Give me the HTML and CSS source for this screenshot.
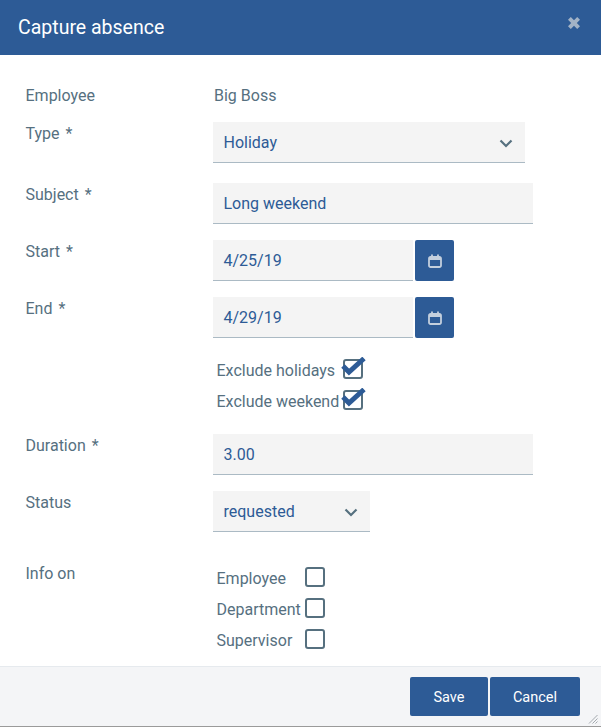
FILE: index.html
```html
<!DOCTYPE html>
<html lang="en">
<head>
<meta charset="utf-8">
<title>Capture absence</title>
<link rel="stylesheet" href="styles.css">
</head>
<body>
<div class="dialog">
  <header class="head">
    <h1 class="title">Capture absence</h1>
    <svg class="close" viewBox="0 0 12 12" width="12" height="12"><path d="M2.800 0 6 3.200 9.200 0 12 2.800 8.800 6 12 9.200 9.200 12 6 8.800 2.800 12 0 9.200 3.200 6 0 2.800Z"/></svg>
  </header>
  <main class="form">
    <div class="row row-employee">
      <div class="label">Employee</div>
      <div class="static">Big Boss</div>
    </div>
    <div class="row row-type">
      <div class="label">Type <span class="req">*</span></div>
      <div class="field w-type">Holiday
        <svg class="chev" viewBox="0 0 14 9" width="14" height="9"><path d="M1.500 1.500 7 7 12.500 1.500"/></svg>
      </div>
    </div>
    <div class="row row-subject">
      <div class="label">Subject <span class="req">*</span></div>
      <div class="field w-full">Long weekend</div>
    </div>
    <div class="row row-start">
      <div class="label">Start <span class="req">*</span></div>
      <div class="field w-date">4/25/19</div>
      <button class="cal" type="button" aria-label="Pick start date">
        <svg viewBox="0 0 16 16" width="16" height="16"><path class="cal-line" d="M2 5.500a1.500 1.500 0 0 1 1.500-1.500h9a1.500 1.500 0 0 1 1.500 1.500v7a1.500 1.500 0 0 1-1.500 1.500h-9a1.500 1.500 0 0 1-1.500-1.500zM2 5.500h12M5 1.500v2.500M11 1.500v2.500"/><rect class="cal-band" x="2" y="4" width="12" height="3"/></svg>
      </button>
    </div>
    <div class="row row-end">
      <div class="label">End <span class="req">*</span></div>
      <div class="field w-date">4/29/19</div>
      <button class="cal" type="button" aria-label="Pick end date">
        <svg viewBox="0 0 16 16" width="16" height="16"><path class="cal-line" d="M2 5.500a1.500 1.500 0 0 1 1.500-1.500h9a1.500 1.500 0 0 1 1.500 1.500v7a1.500 1.500 0 0 1-1.500 1.500h-9a1.500 1.500 0 0 1-1.500-1.500zM2 5.500h12M5 1.500v2.500M11 1.500v2.500"/><rect class="cal-band" x="2" y="4" width="12" height="3"/></svg>
      </button>
    </div>
    <div class="checks checks-exclude">
      <div class="check-row"><span class="check-text">Exclude holidays</span>
        <span class="box"><svg class="tick" viewBox="0 0 25 19" width="25" height="19"><path d="M2 9 8 15 23 1.500"/></svg></span></div>
      <div class="check-row"><span class="check-text">Exclude weekend</span>
        <span class="box"><svg class="tick" viewBox="0 0 25 19" width="25" height="19"><path d="M2 9 8 15 23 1.500"/></svg></span></div>
    </div>
    <div class="row row-duration">
      <div class="label">Duration <span class="req">*</span></div>
      <div class="field w-full">3.00</div>
    </div>
    <div class="row row-status">
      <div class="label">Status</div>
      <div class="field w-status">requested
        <svg class="chev" viewBox="0 0 14 9" width="14" height="9"><path d="M1.500 1.500 7 7 12.500 1.500"/></svg>
      </div>
    </div>
    <div class="row row-info">
      <div class="label label-info">Info on</div>
      <div class="checks">
        <div class="check-row"><span class="check-text">Employee</span><span class="box"></span></div>
        <div class="check-row"><span class="check-text">Department</span><span class="box"></span></div>
        <div class="check-row"><span class="check-text">Supervisor</span><span class="box"></span></div>
      </div>
    </div>
  </main>
  <footer class="foot">
    <button class="btn btn-save" type="button">Save</button>
    <button class="btn btn-cancel" type="button">Cancel</button>
    <svg class="grip" viewBox="0 0 10 10" width="10" height="10"><path d="M9.500 1 1 9.500M9.500 4.500 4.500 9.500M9.500 7.500 7.500 9.500"/></svg>
  </footer>
</div>
</body>
</html>
```
FILE: styles.css
```css
* { box-sizing: border-box; }
html, body { margin: 0; padding: 0; }
body { font-family: Roboto, "Liberation Sans", sans-serif; font-size: 16px; color: #56707f; background: #fff; }
.dialog { position: relative; width: 601px; height: 727px; display: flex; flex-direction: column; border-bottom: 1px solid #9a9a9a; overflow: hidden; }
.head { flex: none; height: 55px; background: #2d5b96; display: flex; align-items: center; justify-content: space-between; padding: 0 21px 0 18px; }
.title { margin: 0; font-size: 19.500px; font-weight: 400; color: #fff; line-height: 55px; }
.close { fill: #a3b3c6; margin-top: -10px; }
.form { flex: 1; padding: 30px 0 0 25.500px; }
.row { display: flex; align-items: flex-start; }
.label { flex: none; width: 187.500px; line-height: 20px; padding-top: 2px; }
.row-employee .label, .label-info { padding-top: 1px; }
.req { margin-left: 2px; }
.static { line-height: 20px; padding: 1px 0 0 1px; }
.row-employee { height: 37px; }
.row-type { height: 61px; }
.row-subject { height: 57px; }
.row-start { height: 57px; }
.row-end { height: 60px; }
.row-duration { height: 57px; }
.row-status { height: 72px; }
.field { position: relative; height: 41px; background: #f4f4f4; border-bottom: 1px solid #abbac4; color: #2d5b96; line-height: 42px; padding-left: 10.500px; }
.w-type { width: 312px; }
.w-full { width: 320px; }
.w-date { width: 200px; }
.w-status { width: 157px; }
.chev { position: absolute; right: 12px; top: 17px; fill: none; stroke: #56707f; stroke-width: 2.200; }
.cal { width: 39px; height: 41px; margin-left: 2px; padding: 0; border: 0; border-radius: 2px; background: #2d5b96; display: flex; align-items: center; justify-content: center; }
.cal-line { fill: none; stroke: #c3cfdd; stroke-width: 1.800; }
.cal-band { fill: #c3cfdd; }
.checks { display: flex; flex-direction: column; gap: 9px; }
.checks-exclude { height: 75px; margin: 2px 0 0 191px; }
.check-row { display: flex; align-items: flex-start; height: 22px; }
.row-info .checks { margin: 4px 0 0 3.500px; }
.check-text { width: 126.500px; line-height: 22px; padding-top: 1px; white-space: nowrap; }
.row-info .check-text { width: 88.500px; }
.box { position: relative; flex: none; width: 20px; height: 20px; border: 2px solid #56707f; border-radius: 3px; background: #fff; }
.tick { position: absolute; left: -4px; top: -4px; fill: none; stroke: #2d5b96; stroke-width: 5; }
.foot { flex: none; height: 60px; background: #f4f5f7; border-top: 1px solid #e6eaee; display: flex; justify-content: flex-end; align-items: flex-start; gap: 2px; padding: 10px 21px 0 0; position: relative; }
.btn { height: 39px; padding: 2px 0 0; border: 0; border-radius: 2px; background: #2d5b96; color: #fff; font-family: inherit; font-size: 14.500px; }
.btn-save { width: 78px; }
.btn-cancel { width: 90px; }
.grip { position: absolute; right: 3px; bottom: 2px; fill: none; stroke: #a3a9ae; stroke-width: 1; }
```
